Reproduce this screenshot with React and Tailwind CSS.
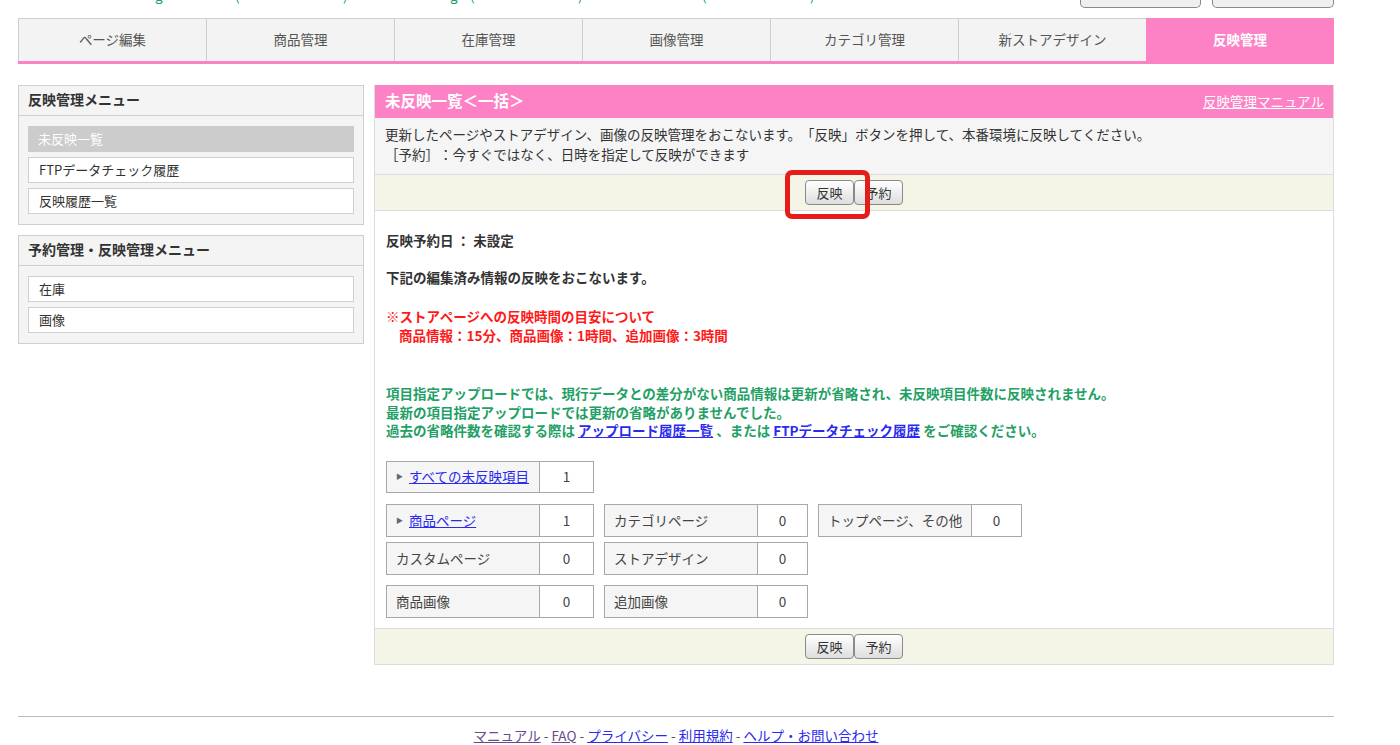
export default function App() {
  const tabs = ["ページ編集", "商品管理", "在庫管理", "画像管理", "カテゴリ管理", "新ストアデザイン", "反映管理"];
  const Btn = ({ children }) => (
    <button className="h-[25px] w-[49px] border border-[#8a8a8a] rounded-[4px] bg-linear-to-b from-white to-[#dedede] text-[13px] text-[#333] leading-none">
      {children}
    </button>
  );
  const Cell = ({ label, value, link, wide }) => (
    <div className={`flex h-[33px] border border-[#a8a8a8] ${wide ? "w-[208px]" : "w-[204px]"}`}>
      <div className="w-[153px] bg-[#f5f5f5] flex items-center pl-[9px] border-r border-[#a8a8a8] whitespace-nowrap overflow-hidden">
        {link ? (
          <>
            <span className="text-[#667] text-[7px] mr-[6px]">▶</span>
            <a className="text-[#2a2aee] underline">{label}</a>
          </>
        ) : (
          <span className="text-[#444]">{label}</span>
        )}
      </div>
      <div className="flex-1 bg-white flex items-center justify-center text-[#444]">{value}</div>
    </div>
  );
  return (
    <div className="w-[1400px] h-[745px] overflow-hidden bg-white font-['Noto_Sans_CJK_JP',sans-serif] text-[#333] [text-spacing-trim:space-all]">
      <div className="ml-[18px] w-[1316px]">
        {/* top strip */}
        <div className="h-[18px] flex items-start">
          <div className="flex-1 h-[4px] overflow-hidden">
            <div className="-mt-[14px] leading-[18px] text-[13.5px] text-[#1f9a6b] flex whitespace-nowrap">
              <span className="w-[137px] inline-block"></span>
              <span className="w-[80px] inline-block">g</span>
              <span className="w-[108px] inline-block">(</span>
              <span className="w-[107px] inline-block">)</span>
              <span className="w-[20px] inline-block">g</span>
              <span className="w-[108px] inline-block">(</span>
              <span className="w-[124px] inline-block">)</span>
              <span className="w-[108px] inline-block">(</span>
              <span className="inline-block">)</span>
            </div>
          </div>
          <div className="w-[121px] h-[8px] border border-t-0 border-[#888] rounded-b-[5px] bg-[#efefef]"></div>
          <div className="w-[122px] h-[8px] ml-[11px] border border-t-0 border-[#888] rounded-b-[5px] bg-[#efefef]"></div>
        </div>

        {/* nav */}
        <nav className="flex h-[46px] border-b-[3px] border-[#fc82c5]">
          {tabs.map((t, i) => {
            const active = i === tabs.length - 1;
            return (
              <div
                key={t}
                className={`w-[188px] flex items-center justify-center pb-[2px] text-[13.5px] border-t ${
                  active
                    ? "bg-[#fc82c5] border-[#fc82c5] text-white font-bold"
                    : "bg-[#f2f3f2] border-t-[#cfcfcf] border-l border-l-[#cfcfcf] text-[#555]"
                }`}
              >
                {t}
              </div>
            );
          })}
        </nav>

        {/* body */}
        <div className="flex gap-[10px] mt-[21px]">
          {/* sidebar */}
          <aside className="w-[346px] shrink-0">
            <div className="border border-[#cfcfcf] bg-[#f3f4f3]">
              <div className="h-[30px] flex items-center pl-[9px] pb-[2px] border-b border-[#cfcfcf] text-[14px] font-bold text-[#333]">反映管理メニュー</div>
              <div className="px-[9px] pt-[10px] pb-[10px] flex flex-col gap-[5px] text-[13px]">
                <div className="h-[26px] flex items-center pl-[10px] pb-[1px] bg-[#cccccc] text-white">未反映一覧</div>
                <div className="h-[26px] flex items-center pl-[10px] pb-[1px] bg-white border border-[#cfcfcf] text-[#333]">FTPデータチェック履歴</div>
                <div className="h-[26px] flex items-center pl-[10px] pb-[1px] bg-white border border-[#cfcfcf] text-[#333]">反映履歴一覧</div>
              </div>
            </div>
            <div className="mt-[10px] border border-[#cfcfcf] bg-[#f3f4f3]">
              <div className="h-[30px] flex items-center pl-[9px] pb-[2px] border-b border-[#cfcfcf] text-[14px] font-bold text-[#333]">予約管理・反映管理メニュー</div>
              <div className="px-[9px] pt-[10px] pb-[10px] flex flex-col gap-[5px] text-[13px]">
                <div className="h-[26px] flex items-center pl-[10px] pb-[1px] bg-white border border-[#cfcfcf] text-[#333]">在庫</div>
                <div className="h-[26px] flex items-center pl-[10px] pb-[1px] bg-white border border-[#cfcfcf] text-[#333]">画像</div>
              </div>
            </div>
          </aside>

          {/* main */}
          <main className="flex-1 border border-t-0 border-[#dcdcdc]">
            <div className="h-[33px] bg-[#fc82c5] flex items-center justify-between pl-[10px] pr-[9px] pb-[1px]">
              <span className="text-white font-bold text-[15.5px]">未反映一覧＜一括＞</span>
              <a className="text-white underline text-[13.5px]">反映管理マニュアル</a>
            </div>
            <div className="bg-[#f5f5f5] px-[10px] pt-[6px] pb-[10px] leading-[20px] text-[13.5px] text-[#333] border-b border-[#dcdcdc]">
              <div>更新したページやストアデザイン、画像の反映管理をおこないます。「反映」ボタンを押して、本番環境に反映してください。</div>
              <div>［予約］：今すぐではなく、日時を指定して反映ができます</div>
            </div>
            <div className="h-[36px] bg-[#f4f4e7] flex justify-center items-center border-b border-[#dcdcdc]">
              <div className="relative flex">
                <Btn>反映</Btn>
                <Btn>予約</Btn>
                <div className="absolute -left-[20px] -top-[10px] w-[85px] h-[49px] border-[5px] border-[#e41d1b] rounded-[7px] pointer-events-none"></div>
              </div>
            </div>

            <div className="px-[11px] pt-[20px] pb-[10px] text-[13.5px]">
              <div className="leading-[19px] font-bold text-[#333]">反映予約日 ： 未設定</div>
              <div className="leading-[19px] font-bold text-[#333] mt-[18px]">下記の編集済み情報の反映をおこないます。</div>
              <div className="leading-[19px] font-bold text-[#ff1a1a] mt-[20px]">
                <div>※ストアページへの反映時間の目安について</div>
                <div className="pl-[13px]">商品情報：15分、商品画像：1時間、追加画像：3時間</div>
              </div>
              <div className="leading-[18.5px] font-bold text-[#1fa065] mt-[39px]">
                <div>項目指定アップロードでは、現行データとの差分がない商品情報は更新が省略され、未反映項目件数に反映されません。</div>
                <div>最新の項目指定アップロードでは更新の省略がありませんでした。</div>
                <div>
                  過去の省略件数を確認する際は <a className="text-[#2a2aee] underline">アップロード履歴一覧</a> 、または{" "}
                  <a className="text-[#2a2aee] underline">FTPデータチェック履歴</a> をご確認ください。
                </div>
              </div>

              <div className="mt-[21px] flex">
                <div className="flex h-[32px] w-[208px] border border-[#a8a8a8]">
                  <div className="w-[153px] bg-[#f5f5f5] flex items-center pl-[9px] border-r border-[#a8a8a8] whitespace-nowrap">
                    <span className="text-[#667] text-[7px] mr-[6px]">▶</span>
                    <a className="text-[#2a2aee] underline">すべての未反映項目</a>
                  </div>
                  <div className="flex-1 bg-white flex items-center justify-center text-[#444]">1</div>
                </div>
              </div>

              <div className="mt-[11px] flex gap-[10px]">
                <Cell label="商品ページ" value="1" link wide />
                <Cell label="カテゴリページ" value="0" />
                <Cell label="トップページ、その他" value="0" />
              </div>
              <div className="mt-[5px] flex gap-[10px]">
                <Cell label="カスタムページ" value="0" wide />
                <Cell label="ストアデザイン" value="0" />
              </div>
              <div className="mt-[10px] flex gap-[10px]">
                <Cell label="商品画像" value="0" wide />
                <Cell label="追加画像" value="0" />
              </div>
            </div>

            <div className="h-[36px] bg-[#f4f4e7] flex justify-center items-center border-t border-[#dcdcdc]">
              <div className="flex">
                <Btn>反映</Btn>
                <Btn>予約</Btn>
              </div>
            </div>
          </main>
        </div>

        {/* footer */}
        <footer className="mt-[51px] border-t border-[#bbbbbb] pt-[8px] text-center text-[13.5px] text-[#555]">
          <a className="text-[#6a4a8c] underline">マニュアル</a> - <a className="text-[#6a4a8c] underline">FAQ</a> -{" "}
          <a className="text-[#2a2aee] underline">プライバシー</a> - <a className="text-[#2a2aee] underline">利用規約</a> -{" "}
          <a className="text-[#2a2aee] underline">ヘルプ・お問い合わせ</a>
        </footer>
      </div>
    </div>
  );
}
